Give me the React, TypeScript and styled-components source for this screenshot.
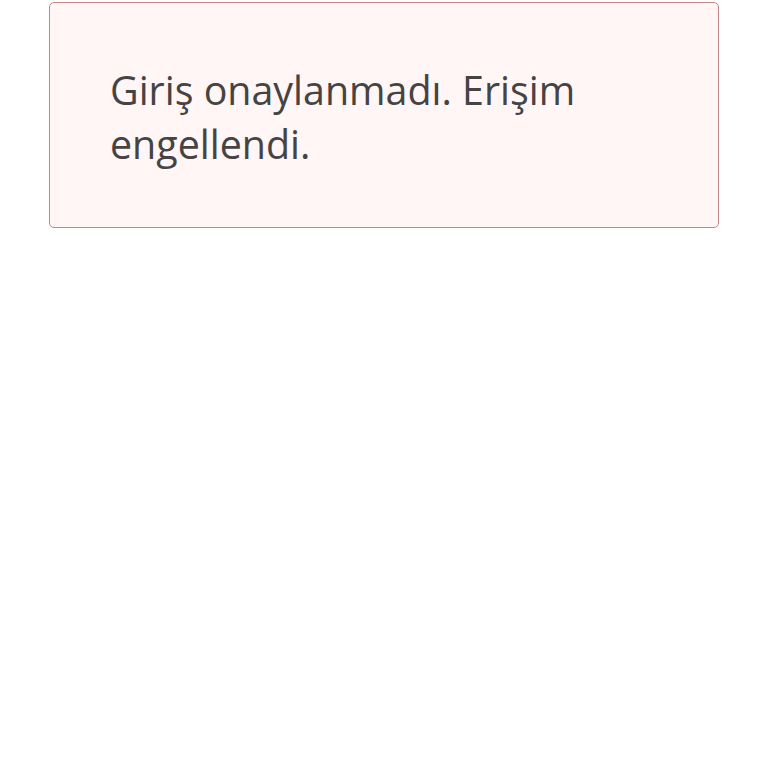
import React from "react";
import styled, { createGlobalStyle } from "styled-components";

const Global = createGlobalStyle`
  html, body { margin: 0; padding: 0; background: #ffffff; }
  body { font-family: "Open Sans", "Noto Sans", sans-serif; }
`;

const Page = styled.div`
  padding: 2px 49px 0 49px;
`;

const Alert = styled.div`
  box-sizing: border-box;
  width: 670px;
  height: 226px;
  border: 1.5px solid #c48586;
  border-radius: 5px;
  background: #fff6f5;
  padding: 60px 60px 0 60px;
`;

const Message = styled.p`
  margin: 0;
  font-size: 39.4px;
  line-height: 54px;
  color: #454343;
`;

export default function App() {
  return (
    <>
      <Global />
      <Page>
        <Alert role="alert">
          <Message>Giriş onaylanmadı. Erişim engellendi.</Message>
        </Alert>
      </Page>
    </>
  );
}
